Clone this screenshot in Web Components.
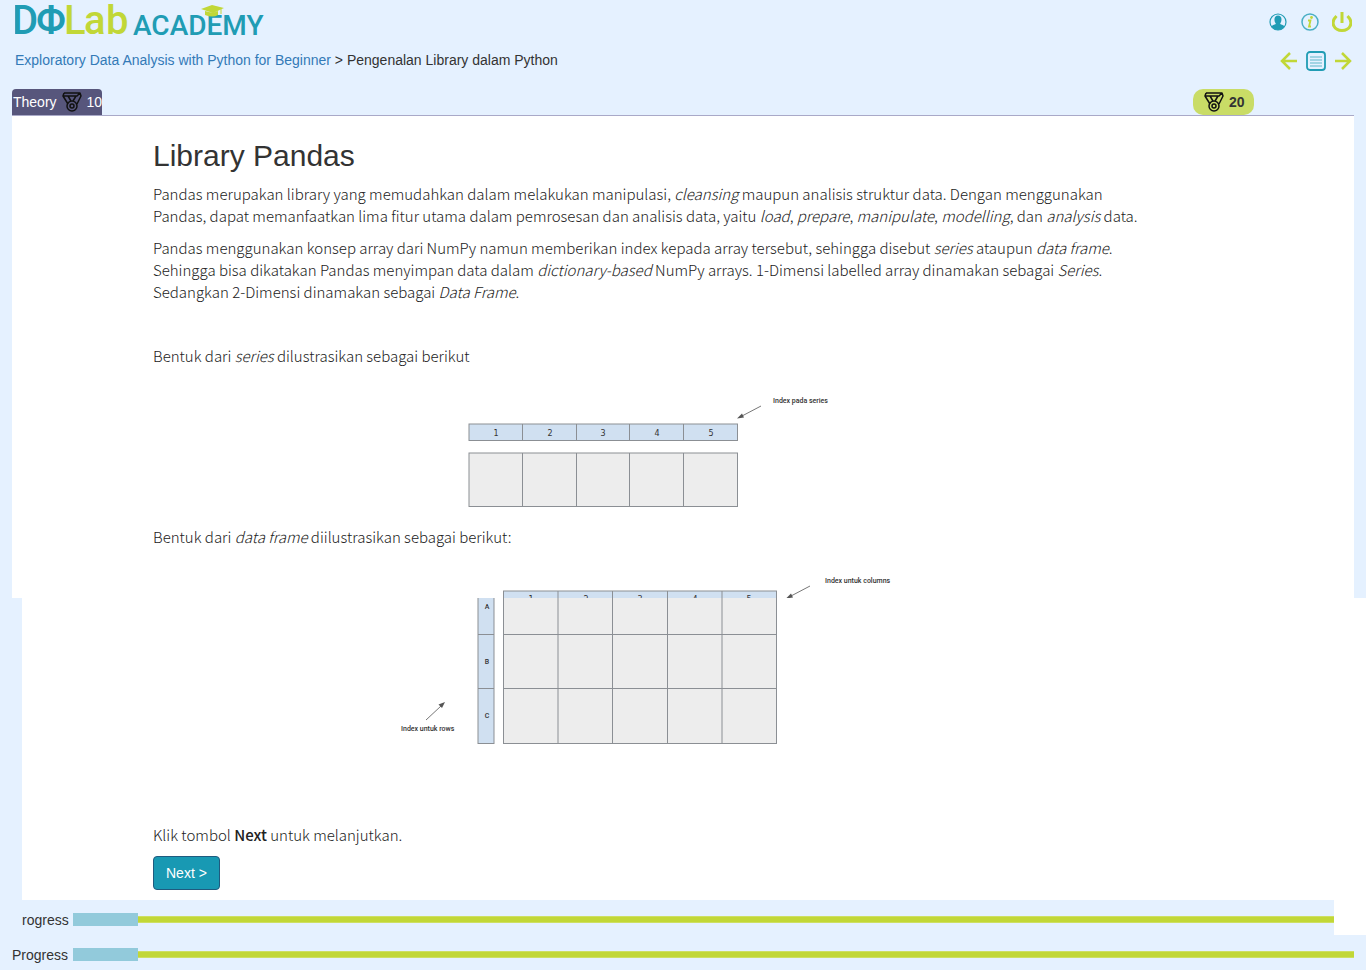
<!DOCTYPE html>
<html lang="id">
<head>
<meta charset="utf-8">
<title>DQLab Academy</title>
<style>
body { margin: 0; background: #e5f1ff; color: #333; font: 14px/20px "Liberation Sans", Arial, sans-serif; }
strong { font-weight: 500; }
</style>
</head>
<body>
<academy-page></academy-page>
<script>
const define = (name, html) => customElements.define(name, class extends HTMLElement {
  constructor() {
    super();
    const t = document.createElement('template');
    t.innerHTML = html;
    this.attachShadow({ mode: 'open' }).append(t.content.cloneNode(true));
  }
});

define('academy-logo', `
<style>
:host { display: block; }
svg { display: block; }
text { font-family: Roboto, sans-serif; font-weight: 500; }
.teal { fill: #209cb4; } .lime { fill: #c1d737; }
</style>
<svg width="256" height="42" viewBox="0 0 256 42" role="img" aria-label="DQLab Academy">
  <text class="teal" x="-3" y="34" font-size="40">D</text>
  <text class="teal" x="21" y="34" font-size="40">Φ</text>
  <text class="lime" x="49" y="34" font-size="40">L</text>
  <text class="lime" x="69" y="34" font-size="40">a</text>
  <text class="lime" x="91" y="34" font-size="40">b</text>
  <text class="teal" x="118" y="35" font-size="28">ACADEMY</text>
  <path class="lime" d="M186 9 197 5 209 8 198 13z M190 11v4q8 3 13 0v-4l-5 2z"/>
  <path d="M206 9v5" stroke="#c1d737" fill="none"/>
</svg>`);

define('medal-icon', `
<style>:host { display: inline-block; } svg { display: block; }</style>
<svg width="20" height="20" viewBox="0 0 20 20" fill="none" stroke="#111" stroke-width="1.5" stroke-linejoin="round" aria-hidden="true">
  <path d="M2 1h16l1 3-4 8M2 1 1 4l5 8M1 4h14l3-3M6 4l3 5M14 4l-3 5"/>
  <circle cx="10" cy="14" r="5"/><circle cx="10" cy="14" r="2"/>
</svg>`);

define('page-actions', `
<style>
:host { display: flex; flex-direction: column; align-items: flex-end; gap: 18px; }
div { display: flex; align-items: center; }
.account { gap: 12px; height: 22px; }
.pager { gap: 8px; height: 20px; }
a, svg { display: block; }
</style>
<div class="account">
  <a href="#profile" aria-label="Profil"><svg width="20" height="20" viewBox="0 0 20 20"><circle cx="10" cy="10" r="8" fill="#e5f1ff" stroke="#209cb4" stroke-width="1.200"/><path d="M10 3.500c4.500 0 4 6 2.200 8 0 1.500 3.300 1 4.300 3-3 4.500-10 4.500-13 0 1-2 4.300-1.500 4.300-3-1.800-2-2.300-8 2.200-8z" fill="#209cb4"/></svg></a>
  <a href="#info" aria-label="Informasi"><svg width="20" height="20" viewBox="0 0 20 20"><circle cx="10" cy="10" r="8" fill="none" stroke="#4aafc4" stroke-width="1.500"/><circle cx="11.500" cy="5.500" r="1.400" fill="#c1d737"/><path d="M8 8.500h2.500L9 14.500h2" fill="none" stroke="#c1d737" stroke-width="1.800"/></svg></a>
  <a href="#logout" aria-label="Keluar"><svg width="20" height="22" viewBox="0 0 20 22"><path d="M4.500 5c-7 7-2 14.500 5.500 14.500s12.500-7.500 5.500-14.500M10 1v11" fill="none" stroke="#c1d737" stroke-width="3"/></svg></a>
</div>
<div class="pager">
  <a href="#prev" aria-label="Sebelumnya"><svg width="18" height="18" viewBox="0 0 18 18"><path d="M10 1 2 9l8 8M2 9h15" fill="none" stroke="#c1d737" stroke-width="2.500"/></svg></a>
  <a href="#list" aria-label="Daftar materi"><svg width="20" height="20" viewBox="0 0 20 20"><rect x="1" y="1" width="18" height="18" rx="3" fill="none" stroke="#209cb4" stroke-width="1.800"/><path d="M4 6h12M4 9h12M4 12h12M4 15h12" stroke="#5fb8ca" stroke-width="1.200"/></svg></a>
  <a href="#next" aria-label="Berikutnya"><svg width="18" height="18" viewBox="0 0 18 18"><path d="m8 1 8 8-8 8M1 9h15" fill="none" stroke="#c1d737" stroke-width="2.500"/></svg></a>
</div>`);

define('page-header', `
<style>
:host { display: flex; justify-content: space-between; height: 89px; padding: 0 14px 0 15px; box-sizing: border-box; }
nav { padding-top: 8px; }
a { color: #337ab7; text-decoration: none; }
page-actions { padding-top: 11px; }
</style>
<div><academy-logo></academy-logo>
<nav aria-label="Breadcrumb"><a href="#course">Exploratory Data Analysis with Python for Beginner</a> &gt; <span>Pengenalan Library dalam Python</span></nav></div>
<page-actions></page-actions>`);

define('lesson-tabs', `
<style>
:host { display: flex; justify-content: space-between; margin: 0 12px; border-bottom: 1px solid #a9a9c8; height: 26px; line-height: 26px; }
.tab { display: flex; align-items: center; gap: 5px; width: 89px; padding-left: 1px; background: #57567c; color: #fff; border-radius: 4px 4px 0 0; white-space: nowrap; }
.points { display: flex; align-items: center; gap: 5px; box-sizing: border-box; width: 61px; padding-left: 11px; margin-right: 100px; background: #c9dc66; border-radius: 10px; font-weight: 700; }
</style>
<div class="tab">Theory <medal-icon></medal-icon> 10</div>
<div class="points"><medal-icon></medal-icon> 20</div>`);

define('series-figure', `
<style>
:host { display: block; margin-bottom: 10px; }
svg { display: block; }
text { font: 500 7px Roboto, sans-serif; fill: #333; }
.num { font: 8px "DejaVu Sans", sans-serif; text-anchor: middle; }
.lines { stroke: #8b8f94; }
</style>
<svg width="800" height="139" viewBox="153 377 800 139" role="img" aria-label="Ilustrasi series">
  <g class="lines">
    <rect x="469" y="424" width="268.500" height="16.500" fill="#d0e0f1"/>
    <rect x="469" y="453" width="268.500" height="53.500" fill="#ededed"/>
    <path d="M522.500 424v17M576.500 424v17M629.500 424v17M683.500 424v17M522.500 453v54M576.500 453v54M629.500 453v54M683.500 453v54"/>
  </g>
  <text class="num" x="496" y="436">1</text><text class="num" x="550" y="436">2</text><text class="num" x="603" y="436">3</text><text class="num" x="657" y="436">4</text><text class="num" x="711" y="436">5</text>
  <path d="M761 406 742 416" stroke="#777"/><path d="M737 418.500l5-5 2 4z" fill="#555"/>
  <text x="773" y="403">Index pada series</text>
</svg>`);

define('frame-columns', `
<style>
:host { display: block; }
svg { display: block; overflow: hidden; }
text { font: 500 7px Roboto, sans-serif; fill: #333; }
.num { font: 8px "DejaVu Sans", sans-serif; text-anchor: middle; }
</style>
<svg width="800" height="40" viewBox="153 558 800 40" role="img" aria-label="Indeks kolom data frame">
  <rect x="503.500" y="591" width="273" height="16" fill="#d0e0f1" stroke="#8b8f94"/>
  <path d="M558 591v16M612.500 591v16M667.500 591v16M722 591v16" stroke="#8b8f94"/>
  <text class="num" x="531" y="602">1</text><text class="num" x="586" y="602">2</text><text class="num" x="640" y="602">3</text><text class="num" x="695" y="602">4</text><text class="num" x="749" y="602">5</text>
  <path d="M810 586 791 596" stroke="#777"/><path d="M786 598.500l5-5 2 4z" fill="#555"/>
  <text x="825" y="583">Index untuk columns</text>
</svg>`);

define('frame-rows', `
<style>
:host { display: block; }
svg { display: block; overflow: hidden; }
text { font: 500 7px Roboto, sans-serif; fill: #333; }
.row { text-anchor: middle; }
</style>
<svg width="800" height="150" viewBox="153 598 800 150" role="img" aria-label="Baris data frame">
  <g stroke="#8b8f94">
    <rect x="478" y="580" width="16" height="163.500" fill="#d0e0f1"/>
    <rect x="503.500" y="580" width="273" height="163.500" fill="#ededed"/>
    <path d="M478 634.500h16M478 688.500h16M503 634.500h274M503 688.500h274M558 598v145M612.500 598v145M667.500 598v145M722 598v145"/>
  </g>
  <text class="row" x="487" y="609">A</text><text class="row" x="487" y="664">B</text><text class="row" x="487" y="718">C</text>
  <path d="M426 720 441 706" stroke="#777"/><path d="M445 702l-3 6-3.500-3.500z" fill="#555"/>
  <text x="401" y="731">Index untuk rows</text>
</svg>`);

define('lesson-copy', `
<style>
:host { display: block; color: #222; font: 300 15px/22px "Noto Sans CJK SC", "Noto Sans", sans-serif; max-width: 986px; }
::slotted(h2) { margin: 0 0 11px; color: #333; font: 30px/33px "Liberation Sans", Arial, sans-serif; }
::slotted(p) { margin: 0 0 10px; }
</style>
<slot></slot>`);

define('progress-row', `
<style>
:host { display: flex; align-items: center; height: 35px; gap: 4px; background: #e5f1ff; }
.label { padding-top: 5px; }
.track { flex: 1; display: flex; align-items: center; height: 13px; padding-top: 4px; }
.done { width: 65px; height: 13px; background: #92cadb; }
.rest { flex: 1; height: 5px; background: #c1d737; border: solid #cddf62; border-width: 1px 0; }
</style>
<span class="label" id="label"><slot></slot></span>
<div class="track" role="progressbar" aria-labelledby="label" aria-valuenow="5"><div class="done"></div><div class="rest"></div></div>`);

define('academy-page', `
<style>
:host { display: block; }
.upper { margin: 0 12px; padding: 23px 0 0 141px; background: #fff; }
.lower { margin-left: 22px; background: #fff; }
.body { padding: 0 0 10px 131px; }
frame-rows { margin-bottom: 76px; }
strong { font-weight: 500; }
button { display: block; box-sizing: border-box; height: 34px; margin: 0; padding: 6px 12px; border: 1px solid #1f5b7f; border-radius: 4px; background: #1899b3; color: #fff; font: 14px/20px "Liberation Sans", Arial, sans-serif; }
.lower progress-row { margin-right: 32px; }
.last { margin: 0 12px; gap: 5px; }
</style>
<page-header></page-header>
<lesson-tabs></lesson-tabs>
<main>
  <section class="upper"><lesson-copy>
    <h2>Library Pandas</h2>
    <p>Pandas merupakan library yang memudahkan dalam melakukan manipulasi, <em>cleansing</em> maupun analisis struktur data. Dengan menggunakan Pandas, dapat memanfaatkan lima fitur utama dalam pemrosesan dan analisis data, yaitu <em>load</em>, <em>prepare</em>, <em>manipulate</em>, <em>modelling</em>, dan <em>analysis</em> data.</p>
    <p>Pandas menggunakan konsep array dari NumPy namun memberikan index kepada array tersebut, sehingga disebut <em>series</em> ataupun <em>data frame</em>. Sehingga bisa dikatakan Pandas menyimpan data dalam <em>dictionary-based</em> NumPy arrays. 1-Dimensi labelled array dinamakan sebagai <em>Series</em>. Sedangkan 2-Dimensi dinamakan sebagai <em>Data Frame</em>.</p>
    <p>&nbsp;</p>
    <p>Bentuk dari <em>series</em> dilustrasikan sebagai berikut</p>
    <series-figure></series-figure>
    <p>Bentuk dari <em>data frame</em> diilustrasikan sebagai berikut:</p>
    <frame-columns></frame-columns>
  </lesson-copy></section>
  <section class="lower">
    <div class="body">
      <frame-rows></frame-rows>
      <lesson-copy><p>Klik tombol <strong>Next</strong> untuk melanjutkan.</p></lesson-copy>
      <button type="button">Next &gt;</button>
    </div>
    <progress-row>rogress</progress-row>
  </section>
</main>
<progress-row class="last">Progress</progress-row>`);
</script>
</body>
</html>
